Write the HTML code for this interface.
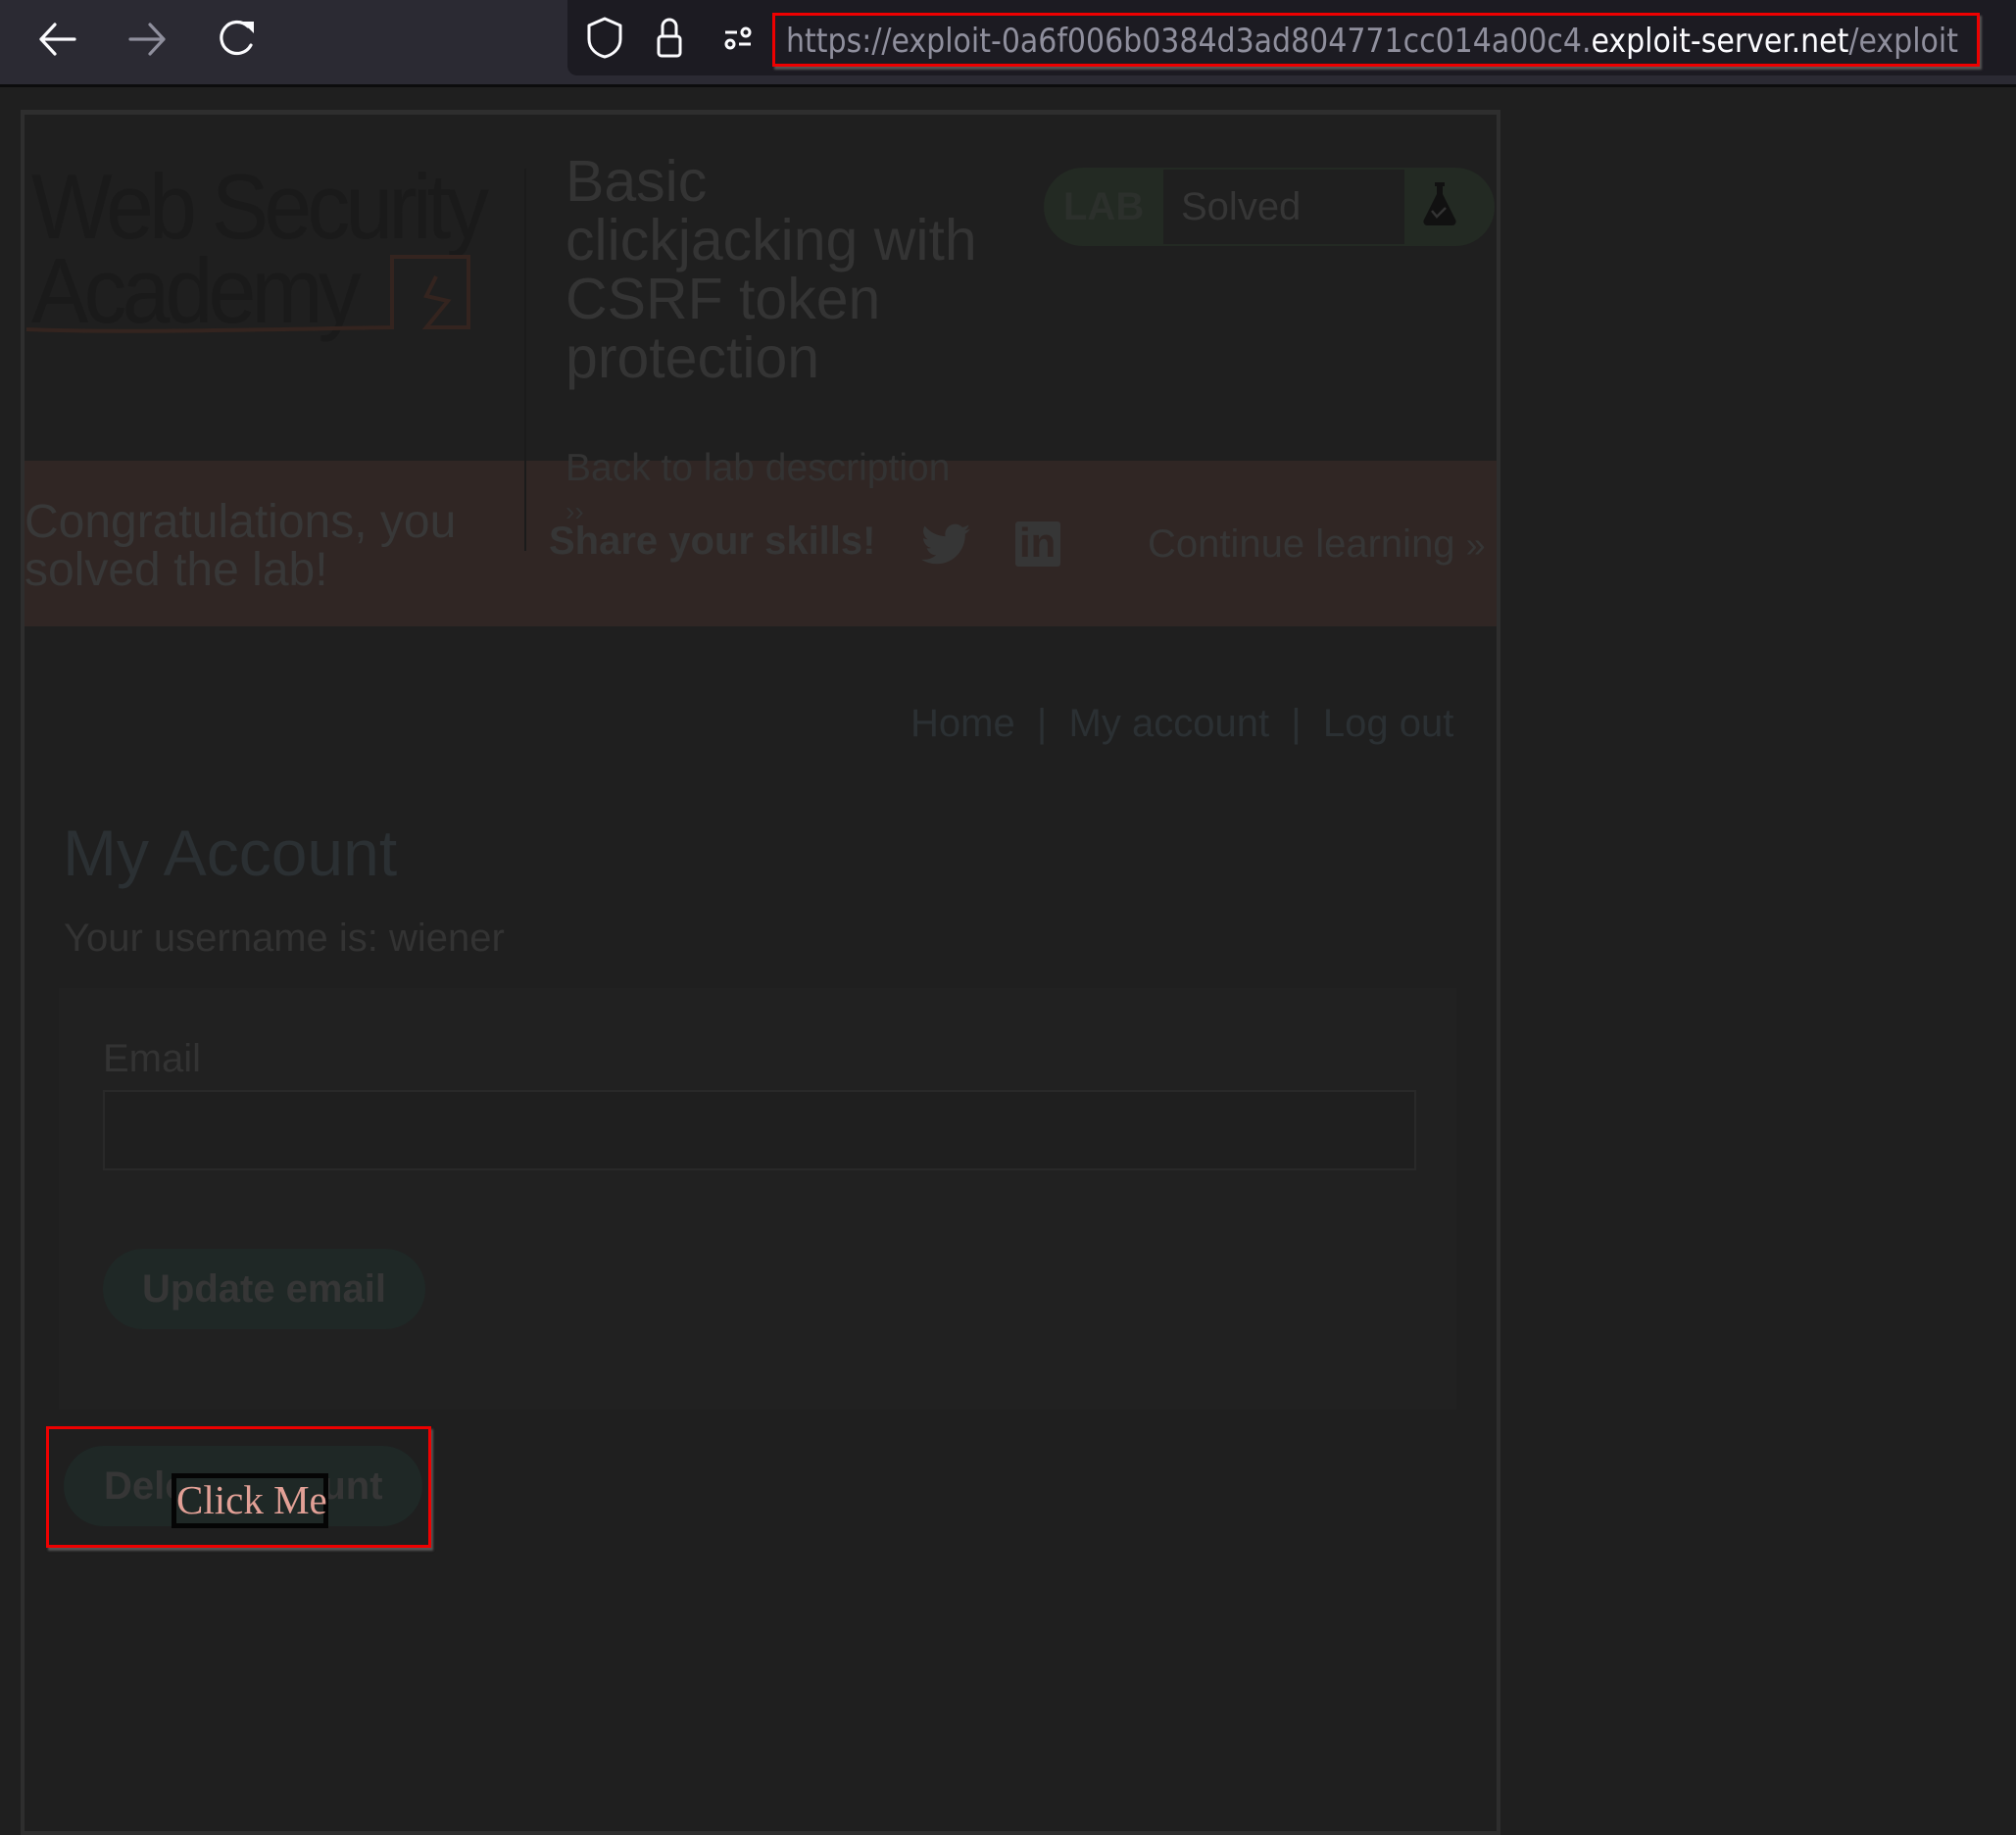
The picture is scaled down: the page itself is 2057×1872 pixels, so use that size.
<!DOCTYPE html>
<html><head><meta charset="utf-8"><style>
*{margin:0;padding:0;box-sizing:border-box}
html,body{width:2057px;height:1831px;overflow:hidden;background:#1f1f1f;font-family:"Liberation Sans",Arial,sans-serif}
.a{position:absolute;white-space:nowrap}
.t{color:#363636}
</style></head><body>
<div class="a" style="left:0;top:0;width:2057px;height:86px;background:#2b2a33"></div>
<div class="a" style="left:0;top:86px;width:2057px;height:3px;background:#0c0c0d"></div>
<div class="a" style="left:579px;top:0;width:1478px;height:77px;background:#1c1b22;border-radius:0 0 0 10px"></div>
<svg class="a" style="left:0;top:0" width="600" height="86" viewBox="0 0 600 86">
 <g fill="none" stroke="#fbfbfe" stroke-width="3.2" stroke-linecap="round" stroke-linejoin="round">
  <path d="M42 40H76M42 40L56 25M42 40L56 55"/>
  <path d="M133 40H167M167 40L153 25M167 40L153 55" stroke="#8f8f9d"/>
  <path d="M253 27A16 16 0 1 0 256 46"/>
 </g>
 <path d="M247 22L259 22L259 34Z" fill="#fbfbfe"/>
</svg>
<svg class="a" style="left:590px;top:0" width="200" height="86" viewBox="0 0 200 86">
 <g fill="none" stroke="#fbfbfe" stroke-width="3" stroke-linejoin="round">
  <path d="M27 19L43 26V40C43 50 35 56 27 58C19 56 11 50 11 40V26Z"/>
  <rect x="82" y="37" width="22" height="20" rx="3"/>
  <path d="M86 37V27A7 7 0 0 1 100 27V37"/>
  <path d="M150 33H162M164 45H176"/>
  <circle cx="171" cy="33" r="4"/><circle cx="155" cy="45" r="4"/>
 </g>
</svg>
<div class="a" style="left:788px;top:13px;width:1232px;height:55px;border:3px solid #e00;box-shadow:2px 3px 2px #555"></div>
<svg class="a" style="left:800px;top:13px" width="1210" height="55">
 <text x="2" y="40" font-family="DejaVu Sans Condensed, Liberation Sans Narrow, sans-serif" font-size="34" textLength="1196" lengthAdjust="spacingAndGlyphs"><tspan fill="#8f8f9d">https://exploit-0a6f006b0384d3ad804771cc014a00c4.</tspan><tspan fill="#fbfbfe">exploit-server.net</tspan><tspan fill="#8f8f9d">/exploit</tspan></text>
</svg>

<div class="a" style="left:21px;top:112px;width:1510px;height:1760px;border:4px solid #2e2e2e;border-top-width:5px"></div>
<div class="a" style="left:25px;top:470px;width:1502px;height:169px;background:#302624"></div>
<div class="a" style="left:535px;top:172px;width:2px;height:390px;background:#1b1b1b"></div>

<div class="a" style="left:32px;top:168px;font-size:94px;line-height:86px;color:#1a1a1a;letter-spacing:-5px;transform:scaleX(0.93);transform-origin:0 0">Web Security<br>Academy</div>
<svg class="a" style="left:25px;top:250px" width="470" height="100" viewBox="0 0 470 100">
 <g fill="none" stroke="#34241f" stroke-width="4">
  <path d="M2 86C100 90 250 86 375 84V12H453V84H410L432 57L410 52L420 32"/>
 </g>
</svg>

<div class="a t" style="left:577px;top:155px;font-size:59px;line-height:60px;color:#343434">Basic<br>clickjacking with<br>CSRF token<br>protection</div>

<div class="a" style="left:1065px;top:171px;width:460px;height:80px;border-radius:40px;background:#232a23"></div>
<div class="a" style="left:1187px;top:173px;width:246px;height:76px;background:#1f1f1f"></div>
<div class="a" style="left:1085px;top:189px;font-size:40px;font-weight:bold;color:#2c302c">LAB</div>
<div class="a" style="left:1205px;top:189px;font-size:40px;color:#363636">Solved</div>
<svg class="a" style="left:1445px;top:184px" width="50" height="56" viewBox="0 0 50 56">
 <path d="M19 2H29V6H27V14L40 40A4 4 0 0 1 36 46H12A4 4 0 0 1 8 40L21 14V6H19Z" fill="#111"/>
 <path d="M16 31L21 37L30 28" fill="none" stroke="#333" stroke-width="2.5"/>
</svg>

<div class="a t" style="left:577px;top:456px;font-size:39px;color:#333">Back to lab description</div>
<div class="a" style="left:577px;top:506px;font-size:28px;color:#333">&#8250;&#8250;</div>
<div class="a t" style="left:25px;top:508px;font-size:48px;line-height:49px;color:#383838">Congratulations, you<br>solved the lab!</div>
<div class="a" style="left:560px;top:530px;font-size:40px;font-weight:bold;color:#363636">Share your skills!</div>
<svg class="a" style="left:940px;top:533px" width="50" height="45" viewBox="0 0 24 20">
 <path fill="#363636" d="M24 2.4a10 10 0 0 1-2.8.8A5 5 0 0 0 23.3.4a10 10 0 0 1-3.1 1.2A4.9 4.9 0 0 0 11.8 6 14 14 0 0 1 1.7.9a4.9 4.9 0 0 0 1.5 6.6A4.9 4.9 0 0 1 1 6.9a4.9 4.9 0 0 0 3.9 4.8 5 5 0 0 1-2.2.1 4.9 4.9 0 0 0 4.6 3.4A9.9 9.9 0 0 1 0 17.3 14 14 0 0 0 7.5 19.5c9 0 14-7.5 14-14v-.6A10 10 0 0 0 24 2.4z"/>
</svg>
<div class="a" style="left:1036px;top:532px;width:46px;height:46px;background:#363636;border-radius:3px"></div>
<div class="a" style="left:1040px;top:530px;font-size:42px;font-weight:bold;color:#302624">in</div>
<div class="a t" style="left:1171px;top:533px;font-size:40px;color:#363636">Continue learning <span style="font-size:36px">&#187;</span></div>

<div class="a" style="left:929px;top:716px;font-size:40px;color:#2b3033">Home &nbsp;| &nbsp;My account &nbsp;| &nbsp;Log out</div>

<div class="a" style="left:64px;top:832px;font-size:66px;color:#2b3033">My Account</div>
<div class="a" style="left:65px;top:935px;font-size:40px;color:#333">Your username is: wiener</div>

<div class="a" style="left:60px;top:1008px;width:1426px;height:430px;background:#212121"></div>
<div class="a" style="left:105px;top:1058px;font-size:40px;color:#333">Email</div>
<div class="a" style="left:105px;top:1112px;width:1340px;height:82px;border:2px solid #292929;background:#1f1f1f"></div>
<div class="a" style="left:105px;top:1274px;width:329px;height:82px;border-radius:41px;background:#1f2826"></div>
<div class="a" style="left:145px;top:1293px;font-size:40px;font-weight:bold;color:#363636">Update email</div>

<div class="a" style="left:65px;top:1475px;width:366px;height:82px;border-radius:41px;background:#1f2826"></div>
<div class="a" style="left:106px;top:1494px;font-size:40px;font-weight:bold;color:#363636">Delete account</div>
<div class="a" style="left:47px;top:1455px;width:393px;height:124px;border:3px solid #e00;box-shadow:2px 3px 2px #555"></div>
<div class="a" style="left:175px;top:1503px;width:160px;height:56px;border:5px solid #050505;background:#1f2826"></div>
<div class="a" style="left:180px;top:1506px;font-family:'Liberation Serif',serif;font-size:41px;color:#e2a096">Click Me</div>
</body></html>
